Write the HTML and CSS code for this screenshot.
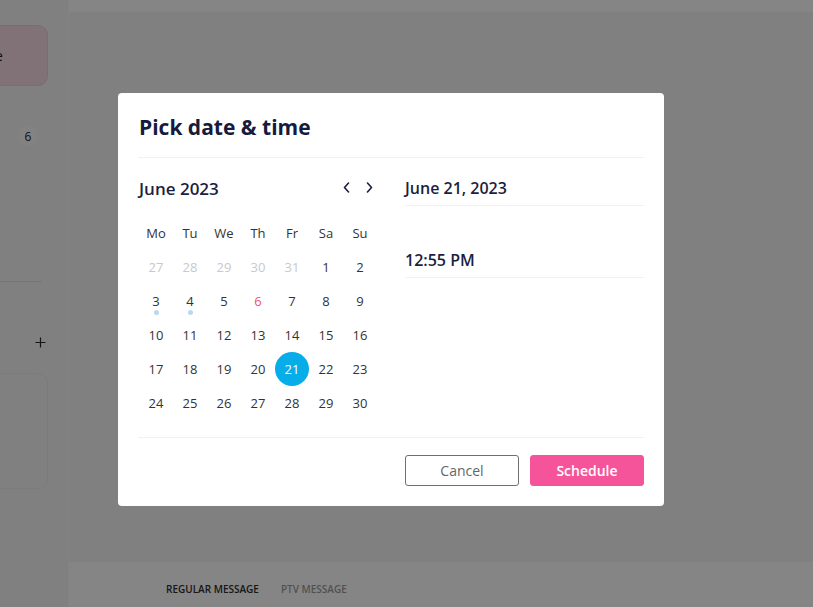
FILE: index.html
```html
<!DOCTYPE html>
<html lang="en">
<head>
<meta charset="utf-8">
<title>Pick date &amp; time</title>
<link rel="stylesheet" href="styles.css">
</head>
<body>
<div class="app">
  <aside class="side">
    <div class="side-card"><span>Queue</span></div>
    <div class="side-row"><span class="badge">6</span></div>
    <div class="side-divider"></div>
    <div class="side-add">
      <svg width="11" height="11" viewBox="0 0 11 11"><path d="M5.5 0.5v10M0.5 5.5h10" stroke="#2b2b2b" stroke-width="1.2" fill="none"/></svg>
    </div>
    <div class="side-box"></div>
  </aside>
  <main class="main">
    <div class="topbar"></div>
    <div class="content"></div>
    <div class="tabs">
      <span class="tab active">REGULAR MESSAGE</span>
      <span class="tab">PTV MESSAGE</span>
    </div>
  </main>
</div>

<div class="overlay"></div>

<div class="modal">
  <h2 class="title">Pick date &amp; time</h2>
  <div class="divider"></div>
  <div class="body">
    <div class="cal">
      <div class="cal-head">
        <span class="month">June 2023</span>
        <div class="nav">
          <button class="nav-btn" aria-label="Previous month"><svg width="7" height="11" viewBox="0 0 7 11"><path d="M5.5 1L1.5 5.5L5.5 10" stroke="#1b1f3f" stroke-width="1.6" fill="none" stroke-linecap="round" stroke-linejoin="round"/></svg></button>
          <button class="nav-btn" aria-label="Next month"><svg width="7" height="11" viewBox="0 0 7 11"><path d="M1.5 1L5.5 5.5L1.5 10" stroke="#1b1f3f" stroke-width="1.6" fill="none" stroke-linecap="round" stroke-linejoin="round"/></svg></button>
        </div>
      </div>
      <div class="grid">
        <span class="wd">Mo</span><span class="wd">Tu</span><span class="wd">We</span><span class="wd">Th</span><span class="wd">Fr</span><span class="wd">Sa</span><span class="wd">Su</span>
        <span class="day muted">27</span><span class="day muted">28</span><span class="day muted">29</span><span class="day muted">30</span><span class="day muted">31</span><span class="day">1</span><span class="day">2</span>
        <span class="day dot">3</span><span class="day dot">4</span><span class="day">5</span><span class="day holiday">6</span><span class="day">7</span><span class="day">8</span><span class="day">9</span>
        <span class="day">10</span><span class="day">11</span><span class="day">12</span><span class="day">13</span><span class="day">14</span><span class="day">15</span><span class="day">16</span>
        <span class="day">17</span><span class="day">18</span><span class="day">19</span><span class="day">20</span><span class="day selected">21</span><span class="day">22</span><span class="day">23</span>
        <span class="day">24</span><span class="day">25</span><span class="day">26</span><span class="day">27</span><span class="day">28</span><span class="day">29</span><span class="day">30</span>
      </div>
    </div>
    <div class="fields">
      <div class="field">June 21, 2023</div>
      <div class="field time">12:55 PM</div>
    </div>
  </div>
  <div class="divider footer-divider"></div>
  <div class="footer">
    <button class="btn btn-cancel">Cancel</button>
    <button class="btn btn-primary">Schedule</button>
  </div>
</div>
</body>
</html>
```

FILE: styles.css
```css
* { box-sizing: border-box; }

html, body {
  margin: 0;
  padding: 0;
  width: 813px;
  height: 607px;
  overflow: hidden;
  font-family: "Open Sans", "Noto Sans", sans-serif;
}

.app {
  display: flex;
  width: 813px;
  height: 607px;
  background: #f6f6f6;
}

/* left panel */
.side {
  width: 69px;
  flex: none;
  display: flex;
  flex-direction: column;
  border-right: 1px solid #fcfcfc;
  overflow: hidden;
  background: #f6f6f6;
}

.side-card {
  margin-top: 25px;
  margin-left: -80px;
  width: 128px;
  height: 61px;
  flex: none;
  border-radius: 10px;
  background: #f6dbe5;
  border: 1px solid #eccfda;
  display: flex;
  align-items: center;
  padding-left: 38px;
  font-size: 14px;
  color: #1c1c1c;
}

.side-row {
  margin-top: 40px;
  padding-left: 18px;
  height: 20px;
  display: flex;
}

.badge {
  width: 20px;
  height: 20px;
  border-radius: 50%;
  background: #f9f9f9;
  display: flex;
  align-items: center;
  justify-content: center;
  font-size: 12px;
  color: #1e1e1e;
}

.side-divider {
  margin-top: 135px;
  width: 42px;
  height: 1px;
  background: #e2e2e2;
  flex: none;
}

.side-add {
  margin-top: 55px;
  margin-left: 35px;
  width: 11px;
  height: 11px;
  display: flex;
}

.side-box {
  margin-top: 25px;
  margin-left: -80px;
  width: 128px;
  height: 116px;
  flex: none;
  border-radius: 10px;
  border: 1px solid #ebebeb;
}

/* main area */
.main {
  flex: 1;
  display: flex;
  flex-direction: column;
}

.topbar {
  height: 12px;
  background: #ffffff;
  flex: none;
}

.content {
  flex: 1;
  background: #f6f6f6;
}

.tabs {
  height: 45px;
  flex: none;
  background: #ffffff;
  display: flex;
  gap: 22px;
  padding-left: 97px;
  padding-top: 20px;
}

.tab {
  font-size: 10px;
  line-height: 14px;
  font-weight: 600;
  color: #9c9c9c;
}

.tab.active {
  color: #2e2e2e;
}

/* overlay + modal */
.overlay {
  position: fixed;
  inset: 0;
  background: rgba(0, 0, 0, 0.48);
}

.modal {
  position: absolute;
  left: 118px;
  top: 93px;
  width: 546px;
  padding: 20px 20px 20px 21px;
  background: #ffffff;
  border-radius: 4px;
  color: #1b1f3f;
}

.title {
  margin: 0;
  font-size: 21px;
  line-height: 28px;
  font-weight: 700;
  color: #161a3c;
}

.divider {
  margin-top: 16px;
  margin-left: -1px;
  height: 1px;
  background: #f1f1f1;
}

.body {
  display: flex;
  gap: 28px;
  padding-top: 13px;
}

.cal {
  width: 238px;
  flex: none;
}

.cal-head {
  height: 34px;
  display: flex;
  align-items: center;
  justify-content: space-between;
}

.month {
  font-size: 17px;
  font-weight: 600;
  color: #1b1f3f;
}

.nav {
  display: flex;
  gap: 7px;
  margin-top: -2px;
}

.nav-btn {
  width: 16px;
  height: 20px;
  padding: 0;
  border: 0;
  background: none;
  display: flex;
  align-items: center;
  justify-content: center;
}

.grid {
  margin-top: 11px;
  display: grid;
  grid-template-columns: repeat(7, 34px);
  grid-auto-rows: 34px;
}

.wd, .day {
  display: flex;
  align-items: center;
  justify-content: center;
  font-size: 13px;
  color: #333333;
  position: relative;
}

.day.muted { color: #c9c9c9; }

.day.holiday { color: #f0507a; }

.day.selected {
  background: #07ade9;
  color: #ffffff;
  border-radius: 50%;
}

.day.dot::after {
  content: "";
  position: absolute;
  bottom: 3px;
  left: 50%;
  width: 5px;
  height: 5px;
  margin-left: -2.5px;
  border-radius: 50%;
  background: #b8d9ee;
}

.fields {
  flex: 1;
  display: flex;
  flex-direction: column;
}

.field {
  height: 35px;
  border-bottom: 1px solid #f1f1f1;
  display: flex;
  align-items: center;
  font-size: 16px;
  font-weight: 600;
  color: #1b1f3f;
}

.field.time {
  margin-top: 37px;
}

.footer-divider {
  margin-top: 17px;
}

.footer {
  padding-top: 17px;
  display: flex;
  justify-content: flex-end;
  gap: 11px;
}

.btn {
  width: 114px;
  height: 31px;
  border-radius: 3px;
  font-family: "Open Sans", "Noto Sans", sans-serif;
  font-size: 14px;
  padding: 0;
  display: flex;
  align-items: center;
  justify-content: center;
}

.btn-cancel {
  background: #ffffff;
  border: 1px solid #6f6f6f;
  color: #666666;
}

.btn-primary {
  background: #f6549a;
  border: 1px solid #f6549a;
  color: #ffffff;
  font-weight: 600;
}
```
